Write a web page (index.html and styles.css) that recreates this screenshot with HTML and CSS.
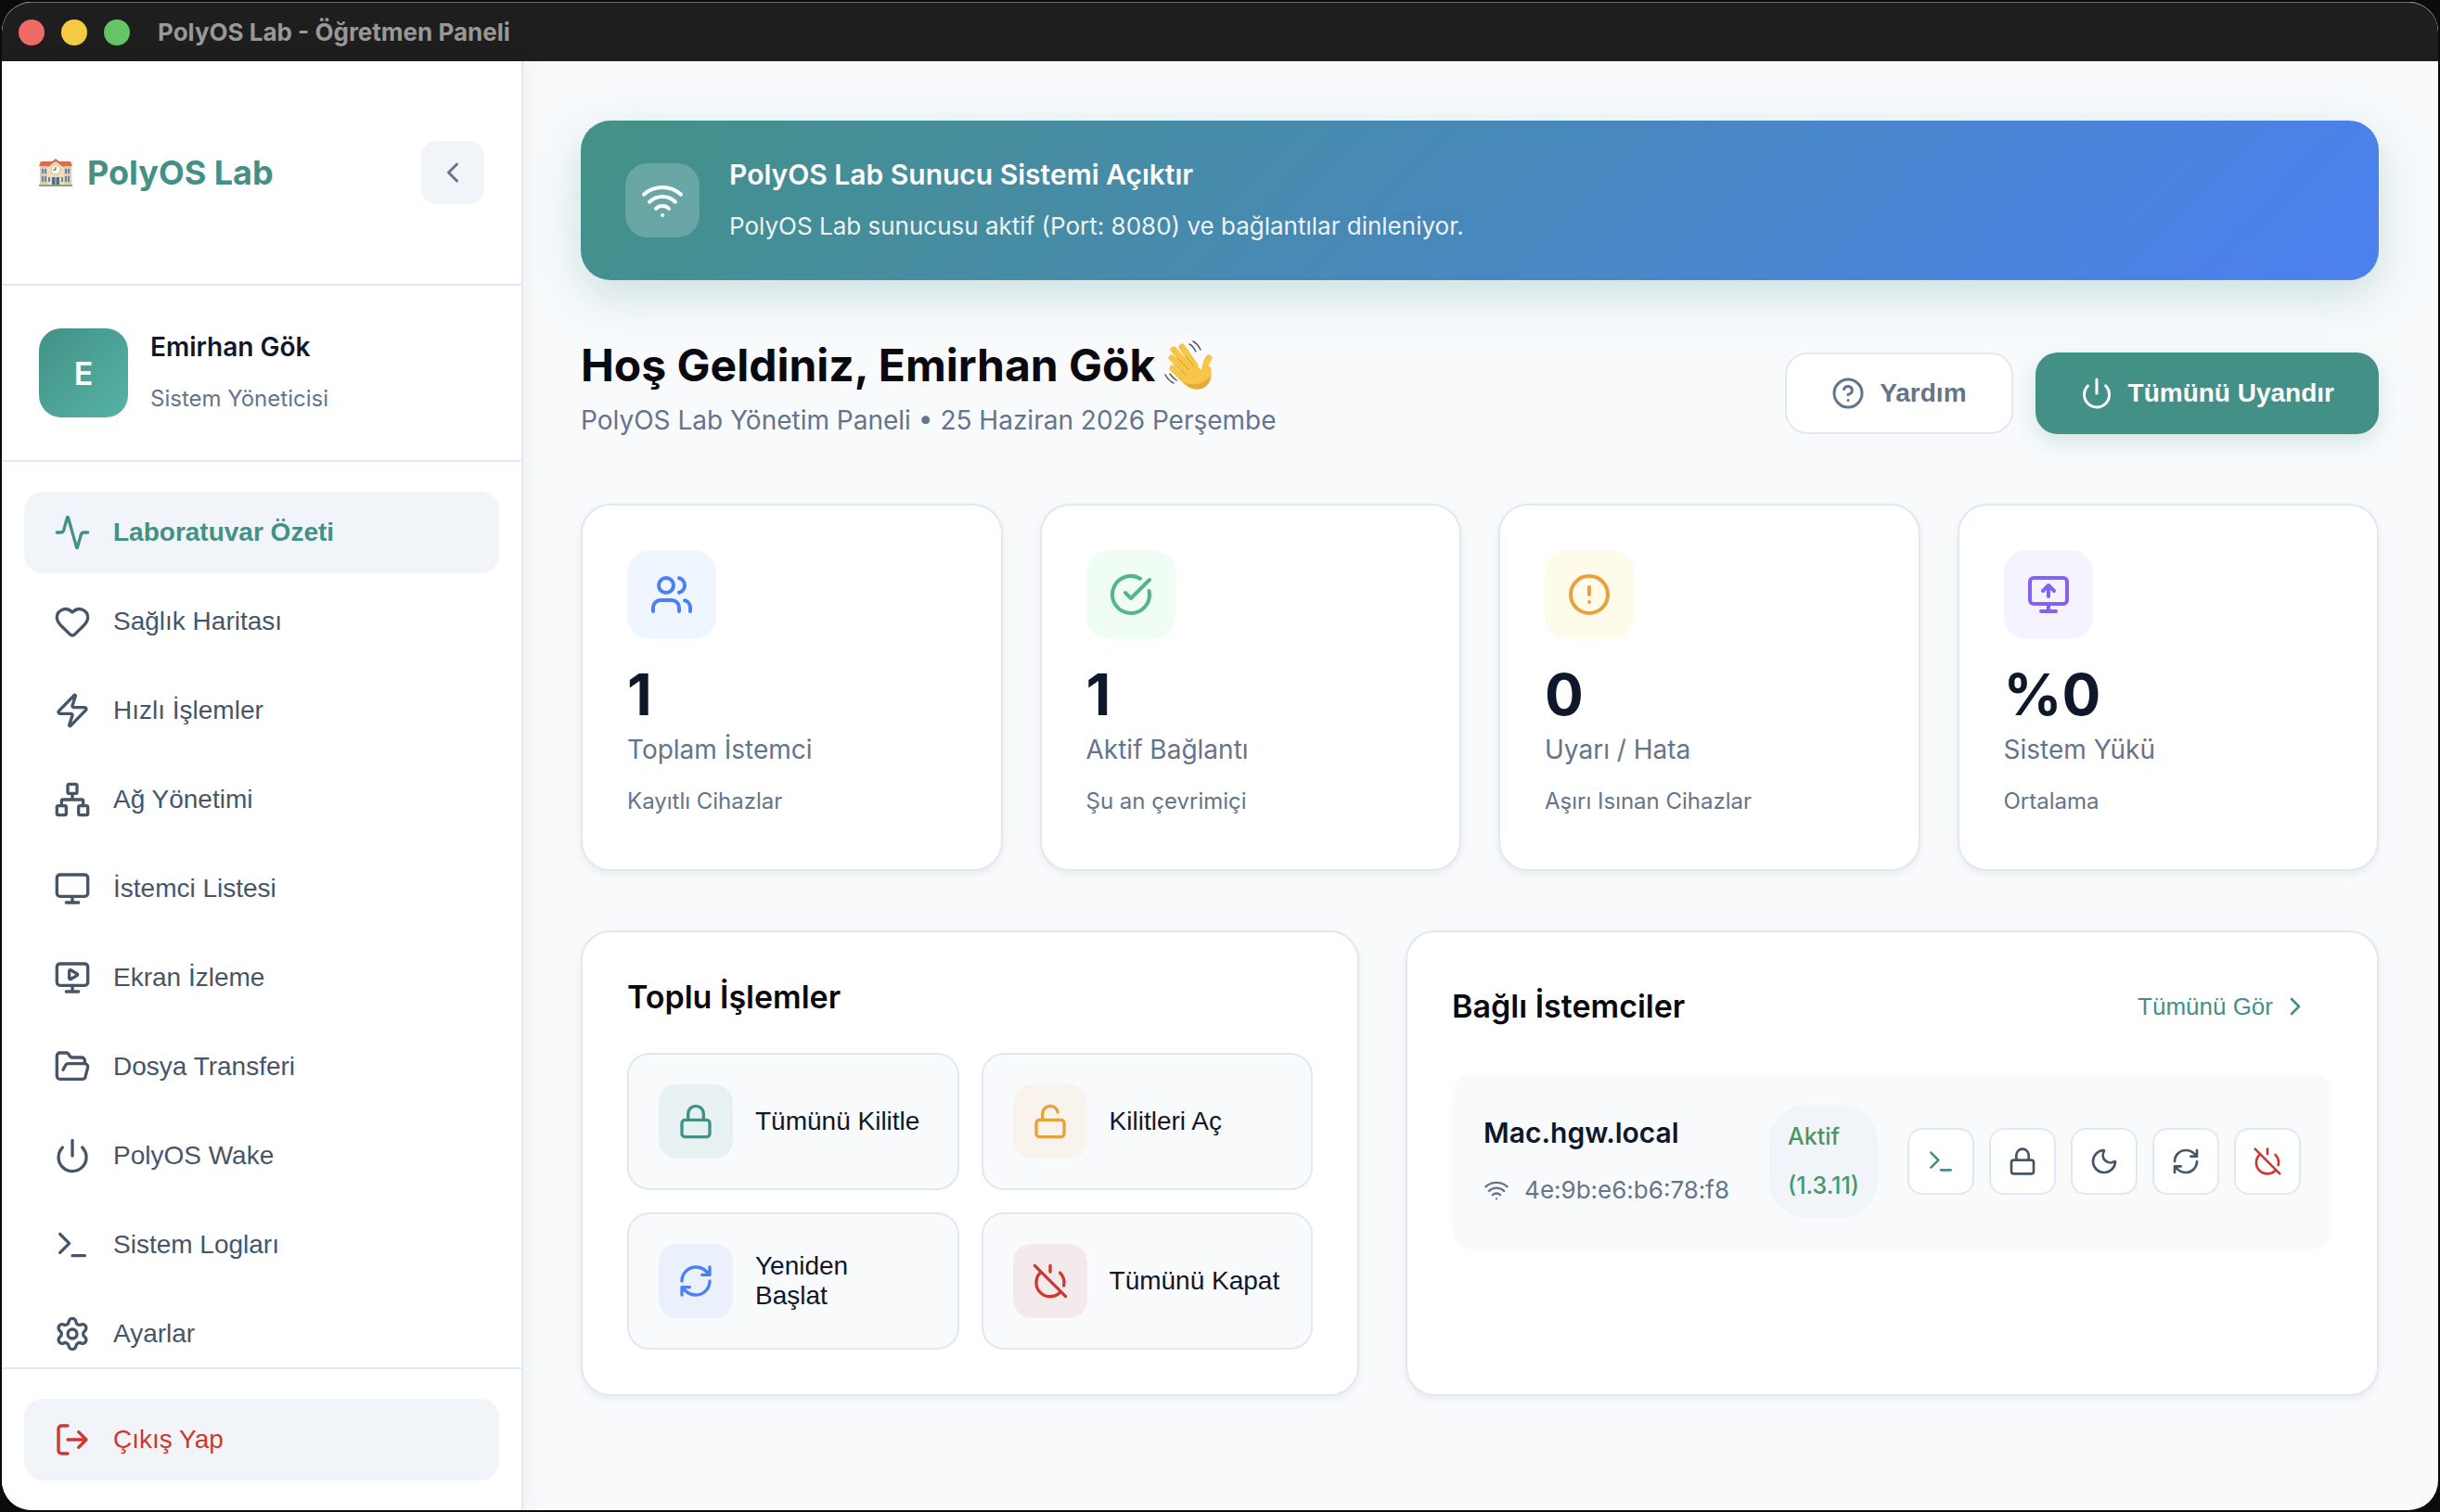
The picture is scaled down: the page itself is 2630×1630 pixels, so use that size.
FILE: index.html
```html
<!DOCTYPE html>
<html lang="tr">
  <head>
    <meta charset="utf-8">
    <title>PolyOS Lab - Öğretmen Paneli</title>
    <link rel="stylesheet" href="styles.css">
  </head>
  <body>
    <svg class="sprite" aria-hidden="true">
      <symbol id="i-activity" viewBox="0 0 24 24"><path d="M22 12h-2.48a2 2 0 0 0-1.93 1.46l-2.35 8.36a.25.25 0 0 1-.48 0L9.24 2.18a.25.25 0 0 0-.48 0l-2.35 8.36A2 2 0 0 1 4.49 12H2"/></symbol>
      <symbol id="i-heart" viewBox="0 0 24 24"><path d="M2 9.5a5.5 5.5 0 0 1 9.591-3.676.56.56 0 0 0 .818 0A5.49 5.49 0 0 1 22 9.5c0 2.29-1.5 4-3 5.5l-5.492 5.313a2 2 0 0 1-3 .019L5 15c-1.5-1.5-3-3.2-3-5.5"/></symbol>
      <symbol id="i-zap" viewBox="0 0 24 24"><path d="M4 14a1 1 0 0 1-.78-1.63l9.9-10.2a.5.5 0 0 1 .86.46l-1.92 6.02A1 1 0 0 0 13 10h7a1 1 0 0 1 .78 1.63l-9.9 10.2a.5.5 0 0 1-.86-.46l1.92-6.02A1 1 0 0 0 11 14z"/></symbol>
      <symbol id="i-network" viewBox="0 0 24 24"><rect x="16" y="16" width="6" height="6" rx="1"/><rect x="2" y="16" width="6" height="6" rx="1"/><rect x="9" y="2" width="6" height="6" rx="1"/><path d="M5 16v-3a1 1 0 0 1 1-1h12a1 1 0 0 1 1 1v3M12 12V8"/></symbol>
      <symbol id="i-monitor" viewBox="0 0 24 24"><rect x="2" y="3" width="20" height="14" rx="2"/><path d="M8 21h8M12 17v4"/></symbol>
      <symbol id="i-monitor-play" viewBox="0 0 24 24"><path d="M15.033 9.44a.647.647 0 0 1 0 1.12l-4.065 2.352a.645.645 0 0 1-.968-.56V7.648a.645.645 0 0 1 .967-.56z"/><rect x="2" y="3" width="20" height="14" rx="2"/><path d="M8 21h8M12 17v4"/></symbol>
      <symbol id="i-monitor-up" viewBox="0 0 24 24"><path d="m9 10 3-3 3 3M12 13V7"/><rect x="2" y="3" width="20" height="14" rx="2"/><path d="M8 21h8M12 17v4"/></symbol>
      <symbol id="i-folder" viewBox="0 0 24 24"><path d="m6 14 1.5-2.9A2 2 0 0 1 9.24 10H20a2 2 0 0 1 1.94 2.5l-1.54 6a2 2 0 0 1-1.95 1.5H4a2 2 0 0 1-2-2V5a2 2 0 0 1 2-2h3.9a2 2 0 0 1 1.69.9l.81 1.2a2 2 0 0 0 1.67.9H18a2 2 0 0 1 2 2v2"/></symbol>
      <symbol id="i-power" viewBox="0 0 24 24"><path d="M12 2v10M18.4 6.6a9 9 0 1 1-12.77.04"/></symbol>
      <symbol id="i-power-off" viewBox="0 0 24 24"><path d="M18.36 6.64A9 9 0 0 1 20.77 15M6.16 6.16a9 9 0 1 0 12.68 12.68M12 2v4M2 2l20 20"/></symbol>
      <symbol id="i-terminal" viewBox="0 0 24 24"><path d="m4 17 6-6-6-6M12 19h8"/></symbol>
      <symbol id="i-settings" viewBox="0 0 24 24"><path d="M9.671 4.136a2.34 2.34 0 0 1 4.659 0 2.34 2.34 0 0 0 3.319 1.915 2.34 2.34 0 0 1 2.33 4.033 2.34 2.34 0 0 0 0 3.831 2.34 2.34 0 0 1-2.33 4.033 2.34 2.34 0 0 0-3.319 1.915 2.34 2.34 0 0 1-4.659 0 2.34 2.34 0 0 0-3.32-1.915 2.34 2.34 0 0 1-2.33-4.033 2.34 2.34 0 0 0 0-3.831A2.34 2.34 0 0 1 6.35 6.051a2.34 2.34 0 0 0 3.319-1.915"/><circle cx="12" cy="12" r="3"/></symbol>
      <symbol id="i-logout" viewBox="0 0 24 24"><path d="m16 17 5-5-5-5M21 12H9M9 21H5a2 2 0 0 1-2-2V5a2 2 0 0 1 2-2h4"/></symbol>
      <symbol id="i-left" viewBox="0 0 24 24"><path d="m15 18-6-6 6-6"/></symbol>
      <symbol id="i-right" viewBox="0 0 24 24"><path d="m9 18 6-6-6-6"/></symbol>
      <symbol id="i-wifi" viewBox="0 0 24 24"><path d="M12 20h.01M2 8.82a15 15 0 0 1 20 0M5 12.859a10 10 0 0 1 14 0M8.5 16.429a5 5 0 0 1 7 0"/></symbol>
      <symbol id="i-help" viewBox="0 0 24 24"><circle cx="12" cy="12" r="10"/><path d="M9.09 9a3 3 0 0 1 5.83 1c0 2-3 3-3 3M12 17h.01"/></symbol>
      <symbol id="i-alert" viewBox="0 0 24 24"><circle cx="12" cy="12" r="10"/><path d="M12 8v4M12 16h.01"/></symbol>
      <symbol id="i-check" viewBox="0 0 24 24"><path d="M21.801 10A10 10 0 1 1 17 3.335M9 11l3 3L22 4"/></symbol>
      <symbol id="i-users" viewBox="0 0 24 24"><path d="M16 21v-2a4 4 0 0 0-4-4H6a4 4 0 0 0-4 4v2M22 21v-2a4 4 0 0 0-3-3.87M16 3.13a4 4 0 0 1 0 7.75"/><circle cx="9" cy="7" r="4"/></symbol>
      <symbol id="i-lock" viewBox="0 0 24 24"><rect x="3" y="11" width="18" height="11" rx="2"/><path d="M7 11V7a5 5 0 0 1 10 0v4"/></symbol>
      <symbol id="i-unlock" viewBox="0 0 24 24"><rect x="3" y="11" width="18" height="11" rx="2"/><path d="M7 11V7a5 5 0 0 1 9.9-1"/></symbol>
      <symbol id="i-refresh" viewBox="0 0 24 24"><path d="M3 12a9 9 0 0 1 9-9 9.75 9.75 0 0 1 6.74 2.74L21 8M21 3v5h-5M21 12a9 9 0 0 1-9 9 9.75 9.75 0 0 1-6.74-2.74L3 16M8 16H3v5"/></symbol>
      <symbol id="i-moon" viewBox="0 0 24 24"><path d="M20.985 12.486a9 9 0 1 1-9.473-9.472c.405-.022.617.46.402.803a6 6 0 0 0 8.268 8.268c.344-.215.825-.004.803.401"/></symbol>
    </svg>

    <div class="window">
      <header class="titlebar">
        <span class="dot dot-red"></span>
        <span class="dot dot-yellow"></span>
        <span class="dot dot-green"></span>
        <span class="titlebar-text">PolyOS Lab - Öğretmen Paneli</span>
      </header>

      <div class="app">
        <aside class="sidebar">
          <div class="brand">
            <svg class="school" viewBox="0 0 36 30" aria-hidden="true">
              <rect x="1" y="8" width="34" height="21" fill="#d9cfae"/>
              <path d="M0 8 2 3h32l2 5z" fill="#d96f50"/>
              <path d="M9 29V8l9-7 9 7v21z" fill="#e9e0c3"/>
              <path d="M8 8 18 0l10 8-2 1-8-6-8 6z" fill="#d96f50"/>
              <circle cx="18" cy="12" r="5" fill="#fff" stroke="#d8c25c"/>
              <path d="M18 9v3h-3" fill="none" stroke="#444"/>
              <path d="M3 11h2v5H3zM6 11h2v5H6zM3 19h2v6H3zM6 19h2v6H6zM28 11h2v5h-2zM31 11h2v5h-2zM28 19h2v6h-2zM31 19h2v6h-2zM10 20h2v5h-2zM24 20h2v5h-2z" fill="#6c84a4"/>
              <path d="M14 20h8v9h-8z" fill="#51708f"/>
              <path d="M18 20v9" stroke="#d9cfae"/>
              <path d="M0 28h36v2H0z" fill="#9b9a86"/>
            </svg>
            <span class="brand-name">PolyOS Lab</span>
            <button class="collapse" type="button" aria-label="Menüyü daralt"><svg class="icon icon-36"><use href="#i-left"/></svg></button>
          </div>

          <div class="profile">
            <div class="avatar">E</div>
            <div class="profile-text">
              <div class="profile-name">Emirhan Gök</div>
              <div class="profile-role">Sistem Yöneticisi</div>
            </div>
          </div>

          <nav class="nav">
            <a class="nav-item active" href="#"><svg class="icon icon-40"><use href="#i-activity"/></svg>Laboratuvar Özeti</a>
            <a class="nav-item" href="#"><svg class="icon icon-40"><use href="#i-heart"/></svg>Sağlık Haritası</a>
            <a class="nav-item" href="#"><svg class="icon icon-40"><use href="#i-zap"/></svg>Hızlı İşlemler</a>
            <a class="nav-item" href="#"><svg class="icon icon-40"><use href="#i-network"/></svg>Ağ Yönetimi</a>
            <a class="nav-item" href="#"><svg class="icon icon-40"><use href="#i-monitor"/></svg>İstemci Listesi</a>
            <a class="nav-item" href="#"><svg class="icon icon-40"><use href="#i-monitor-play"/></svg>Ekran İzleme</a>
            <a class="nav-item" href="#"><svg class="icon icon-40"><use href="#i-folder"/></svg>Dosya Transferi</a>
            <a class="nav-item" href="#"><svg class="icon icon-40"><use href="#i-power"/></svg>PolyOS Wake</a>
            <a class="nav-item" href="#"><svg class="icon icon-40"><use href="#i-terminal"/></svg>Sistem Logları</a>
            <a class="nav-item" href="#"><svg class="icon icon-40"><use href="#i-settings"/></svg>Ayarlar</a>
          </nav>

          <div class="sidebar-footer">
            <button class="nav-item logout" type="button"><svg class="icon icon-40"><use href="#i-logout"/></svg>Çıkış Yap</button>
          </div>
        </aside>

        <main class="main">
          <section class="banner">
            <div class="banner-icon"><svg class="icon icon-48"><use href="#i-wifi"/></svg></div>
            <div>
              <div class="banner-title">PolyOS Lab Sunucu Sistemi Açıktır</div>
              <div class="banner-text">PolyOS Lab sunucusu aktif (Port: 8080) ve bağlantılar dinleniyor.</div>
            </div>
          </section>

          <section class="welcome">
            <div>
              <h1>Hoş Geldiniz, Emirhan Gök
                <svg class="wave" viewBox="0 0 56 56" aria-hidden="true">
                  <path d="M27 35 10 20M30 31 12 11M35 28 21 8" fill="none" stroke="#f7c648" stroke-width="7" stroke-linecap="round"/>
                  <path d="M11 31 24 44M45 36c1-7 1-11 5-16" fill="none" stroke="#f7c648" stroke-width="7" stroke-linecap="round"/>
                  <path d="M20 33 34 25l8 8c2-2 3-4 4-7l6 4c2 9 0 17-6 21-7 4-16 3-22-3l-8-8z" fill="#f7c648"/>
                  <path d="M22 46c7 8 17 10 24 5 4-3 6-7 6-12-6 8-18 12-30 7z" fill="#e6aa38"/>
                  <path d="m14 28 11 10M16 20l13 13M25 18l9 11" fill="none" stroke="#d99a2b" stroke-width="1" stroke-linecap="round"/>
                  <path d="M33 2c4 2 6 5 8 9M29 5c3 1 5 4 7 8M3 38c2 4 5 7 9 9M8 37c2 3 4 5 7 7" fill="none" stroke="#55585c" stroke-width="1.500" stroke-linecap="round"/>
                </svg>
              </h1>
              <p class="subtitle">PolyOS Lab Yönetim Paneli • 25 Haziran 2026 Perşembe</p>
            </div>
            <div class="welcome-actions">
              <button class="btn btn-light" type="button"><svg class="icon icon-36"><use href="#i-help"/></svg>Yardım</button>
              <button class="btn btn-primary" type="button"><svg class="icon icon-36"><use href="#i-power"/></svg>Tümünü Uyandır</button>
            </div>
          </section>

          <section class="stats">
            <div class="card stat">
              <div class="stat-icon blue"><svg class="icon icon-48"><use href="#i-users"/></svg></div>
              <div class="stat-value">1</div>
              <div class="stat-label">Toplam İstemci</div>
              <div class="stat-note">Kayıtlı Cihazlar</div>
            </div>
            <div class="card stat">
              <div class="stat-icon green"><svg class="icon icon-48"><use href="#i-check"/></svg></div>
              <div class="stat-value">1</div>
              <div class="stat-label">Aktif Bağlantı</div>
              <div class="stat-note">Şu an çevrimiçi</div>
            </div>
            <div class="card stat">
              <div class="stat-icon amber"><svg class="icon icon-48"><use href="#i-alert"/></svg></div>
              <div class="stat-value">0</div>
              <div class="stat-label">Uyarı / Hata</div>
              <div class="stat-note">Aşırı Isınan Cihazlar</div>
            </div>
            <div class="card stat">
              <div class="stat-icon purple"><svg class="icon icon-48"><use href="#i-monitor-up"/></svg></div>
              <div class="stat-value">%0</div>
              <div class="stat-label">Sistem Yükü</div>
              <div class="stat-note">Ortalama</div>
            </div>
          </section>

          <section class="panels">
            <div class="card panel">
              <h2>Toplu İşlemler</h2>
              <div class="actions">
                <button class="action" type="button"><span class="action-icon act-teal"><svg class="icon icon-40"><use href="#i-lock"/></svg></span><span>Tümünü Kilitle</span></button>
                <button class="action" type="button"><span class="action-icon act-amber"><svg class="icon icon-40"><use href="#i-unlock"/></svg></span><span>Kilitleri Aç</span></button>
                <button class="action" type="button"><span class="action-icon act-blue"><svg class="icon icon-40"><use href="#i-refresh"/></svg></span><span>Yeniden Başlat</span></button>
                <button class="action" type="button"><span class="action-icon act-red"><svg class="icon icon-40"><use href="#i-power-off"/></svg></span><span>Tümünü Kapat</span></button>
              </div>
            </div>

            <div class="card panel">
              <div class="panel-head">
                <h2>Bağlı İstemciler</h2>
                <a class="see-all" href="#">Tümünü Gör <svg class="icon icon-32"><use href="#i-right"/></svg></a>
              </div>
              <div class="client">
                <div class="client-info">
                  <div class="client-name">Mac.hgw.local</div>
                  <div class="client-mac"><svg class="icon icon-28"><use href="#i-wifi"/></svg>4e:9b:e6:b6:78:f8</div>
                </div>
                <div class="badge">Aktif<br>(1.3.11)</div>
                <div class="client-actions">
                  <button class="tool tool-teal" type="button" aria-label="Terminal"><svg class="icon icon-32"><use href="#i-terminal"/></svg></button>
                  <button class="tool" type="button" aria-label="Kilitle"><svg class="icon icon-32"><use href="#i-lock"/></svg></button>
                  <button class="tool" type="button" aria-label="Uyku"><svg class="icon icon-32"><use href="#i-moon"/></svg></button>
                  <button class="tool" type="button" aria-label="Yeniden başlat"><svg class="icon icon-32"><use href="#i-refresh"/></svg></button>
                  <button class="tool tool-red" type="button" aria-label="Kapat"><svg class="icon icon-32"><use href="#i-power-off"/></svg></button>
                </div>
              </div>
            </div>
          </section>
        </main>
      </div>
    </div>
  </body>
</html>
```
FILE: styles.css
```css
* {
  box-sizing: border-box;
}

body {
  margin: 0;
  height: 100vh;
  padding: 2px;
  background: #0b0b0b;
  font-family: Inter, sans-serif;
  color: #0f172a;
}

h1, h2, p {
  margin: 0;
}

button {
  font-family: "Liberation Sans", Arial, sans-serif;
  cursor: pointer;
}

a {
  text-decoration: none;
}

.sprite {
  display: none;
}

.icon {
  flex: none;
  fill: none;
  stroke: currentColor;
  stroke-width: 2;
  stroke-linecap: round;
  stroke-linejoin: round;
}

.icon-28 { width: 28px; height: 28px; }
.icon-32 { width: 32px; height: 32px; }
.icon-36 { width: 36px; height: 36px; }
.icon-40 { width: 40px; height: 40px; }
.icon-48 { width: 48px; height: 48px; }

/* window frame */
.window {
  display: flex;
  flex-direction: column;
  height: 100%;
  border-radius: 32px;
  overflow: hidden;
  background: #f8fafc;
}

.titlebar {
  display: flex;
  align-items: center;
  gap: 18px;
  flex: none;
  height: 64px;
  padding: 0 18px;
  background: #1e1e1e;
  border-top: 1px solid #6b6b6b;
  border-radius: 32px 32px 0 0;
}

.dot {
  width: 28px;
  height: 28px;
  border-radius: 50%;
}

.dot-red { background: #ed6a66; }
.dot-yellow { background: #f5ca45; }
.dot-green { background: #64c466; }

.titlebar-text {
  margin-left: 12px;
  font-size: 26px;
  font-weight: 700;
  color: #989898;
}

.app {
  display: flex;
  flex: 1;
  min-height: 0;
}

/* sidebar */
.sidebar {
  position: relative;
  display: flex;
  flex-direction: column;
  flex: none;
  width: 562px;
  background: #fff;
  border-right: 2px solid #e2e8f0;
  box-shadow: 4px 0 24px rgba(15, 23, 42, 0.05);
}

.brand {
  display: flex;
  align-items: center;
  flex: none;
  height: 242px;
  padding: 0 40px;
  border-bottom: 2px solid #e2e8f0;
}

.school {
  width: 36px;
  height: 30px;
}

.brand-name {
  margin-left: 16px;
  font-size: 36px;
  font-weight: 700;
  color: #439186;
}

.collapse {
  display: flex;
  align-items: center;
  justify-content: center;
  width: 68px;
  height: 68px;
  margin-left: auto;
  padding: 0;
  border: 0;
  border-radius: 16px;
  background: #f1f5f9;
  color: #64748b;
}

.profile {
  display: flex;
  align-items: center;
  gap: 24px;
  flex: none;
  height: 190px;
  padding: 0 40px;
  border-bottom: 2px solid #e2e8f0;
}

.avatar {
  display: flex;
  align-items: center;
  justify-content: center;
  width: 96px;
  height: 96px;
  border-radius: 24px;
  background: linear-gradient(135deg, #439186, #55b3a5);
  color: #fff;
  font-size: 34px;
  font-weight: 600;
}

.profile-name {
  font-size: 28px;
  line-height: 56px;
  font-weight: 600;
}

.profile-role {
  font-size: 24px;
  line-height: 56px;
  color: #64748b;
}

.nav {
  display: flex;
  flex-direction: column;
  gap: 8px;
  flex: 1;
  min-height: 0;
  padding: 32px 24px;
  overflow: hidden;
}

.nav-item {
  display: flex;
  align-items: center;
  gap: 24px;
  flex: none;
  height: 88px;
  padding: 0 32px;
  border: 0;
  border-radius: 20px;
  color: #475569;
  font-family: "Liberation Sans", Arial, sans-serif;
  font-size: 28px;
}

.nav-item.active {
  background: #f1f5f9;
  color: #439186;
  font-weight: 700;
}

.sidebar-footer {
  flex: none;
  padding: 32px 24px;
  border-top: 2px solid #e2e8f0;
}

.logout {
  width: 100%;
  background: #f1f5f9;
  color: #ce3830;
}

/* main */
.main {
  flex: 1;
  min-width: 0;
  padding: 64px 64px 0 62px;
}

.banner {
  display: flex;
  align-items: center;
  gap: 32px;
  height: 172px;
  padding: 0 48px;
  border-radius: 32px;
  background: linear-gradient(135deg, #439186, #4c80f1);
  box-shadow: 0 16px 48px rgba(67, 145, 134, 0.25);
  color: #fff;
}

.banner-icon {
  display: flex;
  align-items: center;
  justify-content: center;
  width: 80px;
  height: 80px;
  border-radius: 24px;
  background: rgba(255, 255, 255, 0.2);
}

.banner-title {
  font-size: 30px;
  line-height: 56px;
  font-weight: 600;
}

.banner-text {
  font-size: 26px;
  line-height: 56px;
  opacity: 0.9;
}

.welcome {
  display: flex;
  align-items: center;
  justify-content: space-between;
  margin-top: 62px;
  margin-bottom: 60px;
}

h1 {
  display: flex;
  align-items: center;
  gap: 8px;
  font-size: 48px;
  line-height: 60px;
  font-weight: 700;
  color: #09090f;
}

.wave {
  width: 56px;
  height: 56px;
}

.subtitle {
  font-size: 28px;
  line-height: 59px;
  color: #64748b;
}

.welcome-actions {
  display: flex;
  gap: 24px;
}

.btn {
  display: flex;
  align-items: center;
  gap: 16px;
  height: 88px;
  padding: 0 48px;
  border: 0;
  border-radius: 24px;
  font-size: 28px;
  font-weight: 700;
}

.btn-light {
  border: 2px solid #e2e8f0;
  background: #fff;
  color: #64748b;
}

.btn-primary {
  background: #439186;
  box-shadow: 0 8px 24px rgba(67, 145, 134, 0.2);
  color: #fff;
}

.card {
  padding: 48px;
  border: 2px solid #e2e8f0;
  border-radius: 32px;
  background: #fff;
  box-shadow: 0 4px 8px rgba(15, 23, 42, 0.06);
}

.stats {
  display: grid;
  grid-template-columns: repeat(4, 1fr);
  gap: 40px;
}

.stat {
  padding-bottom: 40px;
}

.stat-icon {
  display: flex;
  align-items: center;
  justify-content: center;
  width: 96px;
  height: 96px;
  border-radius: 24px;
}

.blue { background: #eff6ff; color: #4c80f1; }
.green { background: #effdf5; color: #54b586; }
.amber { background: #fffbeb; color: #e9a23b; }
.purple { background: #f5f3ff; color: #8561f0; }

.stat-value {
  margin-top: 24px;
  font-size: 62px;
  line-height: 72px;
  font-weight: 700;
}

.stat-label {
  font-size: 28px;
  line-height: 46px;
  color: #64748b;
}

.stat-note {
  font-size: 24px;
  line-height: 66px;
  color: #64748b;
}

.panels {
  display: grid;
  grid-template-columns: 4fr 5fr;
  gap: 50px;
  margin-top: 64px;
}

h2 {
  font-size: 34px;
  line-height: 44px;
  font-weight: 600;
  color: #09090f;
}

.actions {
  display: grid;
  grid-template-columns: 1fr 1fr;
  gap: 24px;
  margin-top: 38px;
}

.action {
  display: flex;
  align-items: center;
  gap: 24px;
  height: 148px;
  padding: 0 32px;
  border: 2px solid #e2e8f0;
  border-radius: 24px;
  background: #f8fafc;
  color: #0f172a;
  font-size: 28px;
  line-height: 32px;
  text-align: left;
}

.action-icon {
  display: flex;
  align-items: center;
  justify-content: center;
  flex: none;
  width: 80px;
  height: 80px;
  border-radius: 20px;
}

.act-teal { background: #e8f1f2; color: #439186; }
.act-amber { background: #f8f3ed; color: #e9a23b; }
.act-blue { background: #eaf0fc; color: #4c80f1; }
.act-red { background: #f5eaeb; color: #ce3830; }

.panel-head {
  display: flex;
  align-items: center;
  justify-content: space-between;
  height: 64px;
  padding-right: 24px;
}

.see-all {
  display: flex;
  align-items: center;
  gap: 8px;
  color: #439186;
  font-family: "Liberation Sans", Arial, sans-serif;
  font-size: 26px;
}

.client {
  display: flex;
  align-items: center;
  gap: 32px;
  height: 190px;
  margin-top: 40px;
  padding: 0 34px;
  border-radius: 24px;
  background: #f8fafc;
}

.client-info {
  flex: 1;
}

.client-name {
  font-size: 30px;
  line-height: 62px;
  font-weight: 600;
}

.client-mac {
  display: flex;
  align-items: center;
  gap: 16px;
  font-size: 26px;
  line-height: 62px;
  color: #64748b;
}

.badge {
  padding: 8px 20px;
  border-radius: 40px;
  background: #f1f5f9;
  color: #46986a;
  font-size: 25px;
  line-height: 53px;
  font-weight: 500;
}

.client-actions {
  display: flex;
  gap: 16px;
}

.tool {
  display: flex;
  align-items: center;
  justify-content: center;
  width: 72px;
  height: 72px;
  padding: 0;
  border: 2px solid #e2e8f0;
  border-radius: 16px;
  background: #fff;
  color: #475569;
}

.tool-teal { color: #439186; }
.tool-red { color: #ce3830; }
```
